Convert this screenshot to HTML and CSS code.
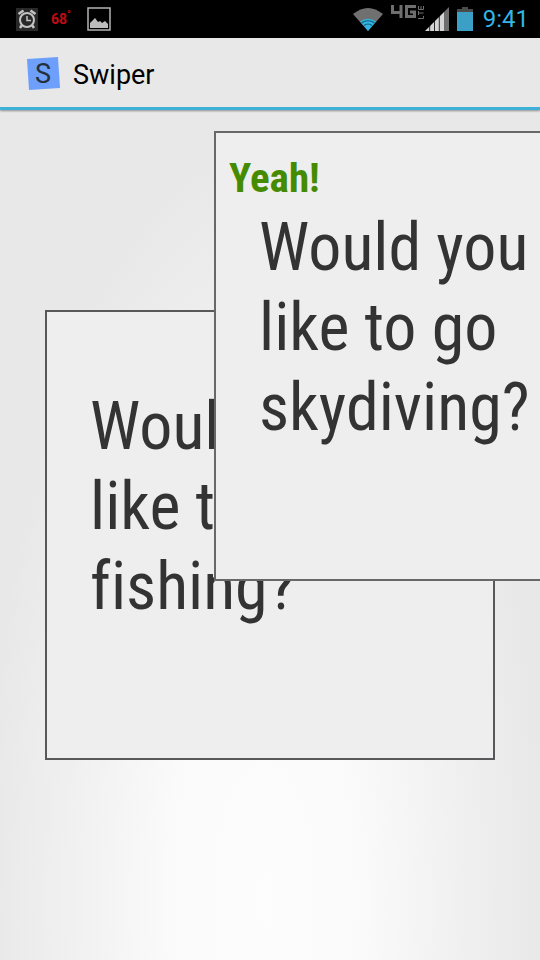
FILE: index.html
```html
<!DOCTYPE html>
<html lang="en">
<head>
<meta charset="utf-8">
<meta name="viewport" content="width=device-width, initial-scale=1">
<title>Swiper</title>
<link rel="stylesheet" href="styles.css">
</head>
<body>
<div class="status-bar">
  <div class="status-left">
    <svg class="alarm" width="22" height="23" viewBox="0 0 22 23" aria-hidden="true">
      <rect width="22" height="23" fill="#292929"/>
      <g fill="none" stroke="#c4c4c4">
        <circle cx="11" cy="12" r="7" stroke-width="2"/>
        <path d="M11 8v4.500h4" stroke-width="1.500"/>
        <path d="M2.500 6 7.500 2.500M19.500 6 14.500 2.500M6 17l-2 3M16 17l2 3" stroke-width="2.500"/>
      </g>
    </svg>
    <span class="temperature">68<sup>°</sup></span>
    <svg class="picture" width="24" height="24" viewBox="0 0 24 24" aria-hidden="true">
      <rect x="1" y="1" width="22" height="22" fill="none" stroke="#b4b4b4" stroke-width="1.500"/>
      <path d="M3 21v-5l5-5 3 4 2-1 2 2 3-2 3 3v4z" fill="#bdbdbd"/>
    </svg>
  </div>
  <div class="status-right">
    <svg class="wifi" width="30" height="23" viewBox="0 0 30 23" aria-hidden="true">
      <path d="M0 6Q15-6 30 6L15 23z" fill="#707070"/>
      <path d="M7 13.500Q15 8 23 13.500L15 23z" fill="#2fb4e4"/>
      <path d="M8.500 15Q15 10.500 21.500 15M11 17.500Q15 14.500 19 17.500" fill="none" stroke="#155a75" stroke-width="1.200"/>
    </svg>
    <svg class="network" width="33" height="15" viewBox="0 0 33 15" aria-hidden="true">
      <g fill="none" stroke="#6e6e6e">
        <path d="M1.500 0v7.500h10M10 0v13M25 1.500H15.500v10H23.500V7H19" stroke-width="3"/>
        <path d="M27 13.500h5.500V11M27.500 6v4M27.500 8h5M27.500 1v3.500h5V1M30 1v3" stroke-width="1"/>
      </g>
    </svg>
    <svg class="signal" width="24" height="24" viewBox="0 0 24 24" aria-hidden="true">
      <path d="M0 24 19 5v19z" fill="#d6d6d6"/>
      <path d="M19 5 24 0v24h-5z" fill="#6e6e6e"/>
      <path d="M4.700 17v7M9.500 12v12M14.300 8v16" stroke="#000" stroke-width="0.800" fill="none"/>
    </svg>
    <svg class="battery" width="16" height="24" viewBox="0 0 16 24" aria-hidden="true">
      <path d="M5 0h6v2h5v4H0V2h5z" fill="#4b4b4b"/>
      <path d="M0 5h16v19H0z" fill="#3c9fc6"/>
    </svg>
    <time class="clock">9:41</time>
  </div>
</div>
<header class="action-bar">
  <svg class="app-icon" width="34" height="34" viewBox="0 0 34 34" aria-hidden="true">
    <path d="M0 2 31 0 33 31 2 33z" fill="#6d9ffb"/>
    <text class="app-letter" x="16" y="26" text-anchor="middle">S</text>
  </svg>
  <h1 class="app-title">Swiper</h1>
</header>
<main class="deck">
  <div class="stack">
    <article class="card">
      <div class="verdict"></div>
      <p class="question">Would you like to go fishing?</p>
    </article>
    <article class="card card-dragged">
      <div class="verdict">Yeah!</div>
      <p class="question">Would you like to go skydiving?</p>
    </article>
  </div>
</main>
</body>
</html>
```
FILE: styles.css
```css
* {
  box-sizing: border-box;
}

body {
  margin: 0;
  min-height: 100vh;
  display: flex;
  flex-direction: column;
  font-family: Roboto, sans-serif;
  background: #e7e7e7;
}

.status-bar {
  display: flex;
  justify-content: space-between;
  height: 38px;
  padding: 0 11px 0 16px;
  background: #000;
}

.status-left,
.status-right {
  display: flex;
  align-items: center;
}

.status-left {
  gap: 13px;
}

.temperature {
  width: 23px;
  color: #c00c12;
  font-size: 14px;
  font-weight: 700;
  line-height: 20px;
  white-space: nowrap;
}

.temperature sup {
  font-size: 10px;
  line-height: 0;
}

.wifi {
  margin-right: 8px;
}

.network {
  align-self: flex-start;
  margin: 5px 1px 0 0;
}

.signal {
  margin-right: 8px;
}

.battery {
  margin-right: 10px;
}

.clock {
  color: #33b5e5;
  font-size: 24px;
  line-height: 40px;
}

.action-bar {
  position: relative;
  display: flex;
  align-items: center;
  gap: 12px;
  height: 72px;
  padding: 2px 27px 0;
  background: #e8e8e8;
  border-bottom: 3px solid #3fb0d8;
  box-shadow: 0 1px 2px rgba(0, 0, 0, 0.4);
}

.app-letter {
  font-size: 27px;
  fill: #24303c;
}

.app-title {
  margin: 0;
  padding-top: 2px;
  color: #000;
  font-size: 27px;
  font-weight: 400;
  line-height: 32px;
}

.deck {
  flex: 1;
  display: grid;
  align-items: center;
  padding: 0 45px;
  overflow: hidden;
  background: radial-gradient(ellipse 52% 90% at 49% 93%, #fdfdfd 0%, #fafafa 35%, #f0f0f0 70%, #e8e8e8 100%);
}

.stack {
  position: relative;
}

.card {
  width: 100%;
  aspect-ratio: 1;
  padding: 20px 13px;
  background: #eee;
  border: 2px solid #58585a;
}

.card-dragged {
  position: absolute;
  top: -179px;
  left: 169px;
  border-color: #68686a;
}

.verdict {
  height: 50px;
  color: #458b00;
  font-family: "Roboto Condensed", "Liberation Sans Narrow", Roboto, sans-serif;
  font-size: 41px;
  font-weight: 700;
  line-height: 50px;
}

.question {
  margin: 5px 20px 0 30px;
  color: #333;
  font-family: "Roboto Condensed", "Liberation Sans Narrow", Roboto, sans-serif;
  font-size: 66px;
  font-variant-ligatures: none;
  line-height: 80px;
}
```
